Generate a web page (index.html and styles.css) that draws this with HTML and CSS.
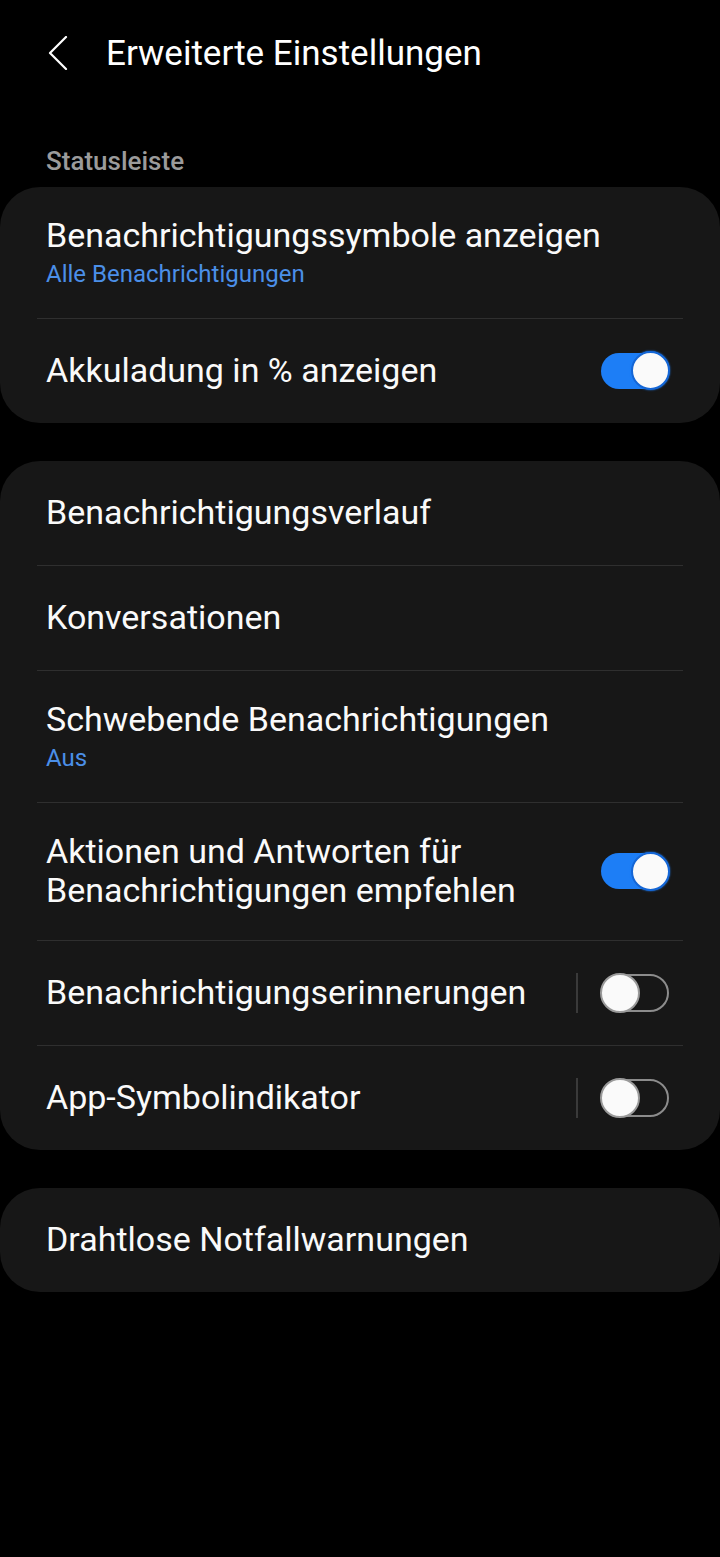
FILE: index.html
```html
<html>
<head>
<meta http-equiv="Content-Type" content="text/html; charset=utf-8" />
<title>Erweiterte Einstellungen</title>
<link rel="stylesheet" href="styles.css">
</head>
<body>
<header class="topbar">
	<span class="back">
		<svg width="20" height="34" viewBox="0 0 20 34"><path d="M18 1 L2 17 L18 33" fill="none" stroke="#fff" stroke-width="2.2" stroke-linejoin="round" stroke-linecap="round"/></svg>
	</span>
	<h1>Erweiterte Einstellungen</h1>
</header>

<div class="label">Statusleiste</div>
<section class="card">
	<div class="row">
		<div class="text">
			<div class="title">Benachrichtigungssymbole anzeigen</div>
			<div class="sub">Alle Benachrichtigungen</div>
		</div>
	</div>
	<div class="divider"></div>
	<div class="row">
		<div class="text"><div class="title">Akkuladung in % anzeigen</div></div>
		<span class="switch on"><span class="knob"></span></span>
	</div>
</section>

<section class="card">
	<div class="row">
		<div class="text"><div class="title">Benachrichtigungsverlauf</div></div>
	</div>
	<div class="divider"></div>
	<div class="row">
		<div class="text"><div class="title">Konversationen</div></div>
	</div>
	<div class="divider"></div>
	<div class="row">
		<div class="text">
			<div class="title">Schwebende Benachrichtigungen</div>
			<div class="sub">Aus</div>
		</div>
	</div>
	<div class="divider"></div>
	<div class="row">
		<div class="text"><div class="title">Aktionen und Antworten für Benachrichtigungen empfehlen</div></div>
		<span class="switch on"><span class="knob"></span></span>
	</div>
	<div class="divider"></div>
	<div class="row">
		<div class="text"><div class="title">Benachrichtigungserinnerungen</div></div>
		<span class="vline"></span>
		<span class="switch"><span class="knob"></span></span>
	</div>
	<div class="divider"></div>
	<div class="row">
		<div class="text"><div class="title">App-Symbolindikator</div></div>
		<span class="vline"></span>
		<span class="switch"><span class="knob"></span></span>
	</div>
</section>

<section class="card">
	<div class="row">
		<div class="text"><div class="title">Drahtlose Notfallwarnungen</div></div>
	</div>
</section>
</body>
</html>
```

FILE: styles.css
```css
body{
	margin:0;
	background:#000;
	color:#fafafa;
	font-family:Roboto, "Noto Sans", sans-serif;
	width:720px;
}
.topbar{
	display:flex;
	align-items:center;
	height:106px;
	padding-left:48px;
}
.back{
	display:flex;
	width:58px;
}
.topbar h1{
	margin:0;
	font-size:35px;
	font-weight:400;
	color:#fff;
}
.label{
	padding:41px 46px 12px;
	font-size:26px;
	line-height:28px;
	font-weight:500;
	color:#9b9b9b;
}
.card{
	background:#171717;
	border-radius:40px;
	margin-bottom:38px;
}
.row{
	display:flex;
	align-items:center;
	min-height:104px;
	box-sizing:border-box;
	padding:29px 51px 30px 46px;
}
.text{
	flex:1;
}
.title{
	font-size:34px;
	line-height:39px;
}
.sub{
	margin-top:6px;
	font-size:24px;
	line-height:27px;
	color:#4b8fe8;
}
.divider{
	height:1px;
	margin:0 37px;
	background:#2f2f2f;
}
.vline{
	width:2px;
	height:40px;
	background:#3a3a3a;
	margin:0 23px 0 10px;
}
.switch{
	display:flex;
	align-items:center;
	flex-shrink:0;
	width:68px;
	height:38px;
	box-sizing:border-box;
	border:2px solid #8c8c8c;
	border-radius:19px;
}
.switch .knob{
	width:40px;
	height:40px;
	margin-left:-3px;
	box-sizing:border-box;
	border:2px solid #9a9a9a;
	border-radius:50%;
	background:#fafafa;
}
.switch.on{
	height:36px;
	border:none;
	background:#1d7ef6;
	justify-content:flex-end;
}
.switch.on .knob{
	width:39px;
	height:39px;
	margin:0;
	margin-right:-1px;
	border:2px solid #1466d6;
	box-shadow:0 0 2px #1d7ef6;
}
```
